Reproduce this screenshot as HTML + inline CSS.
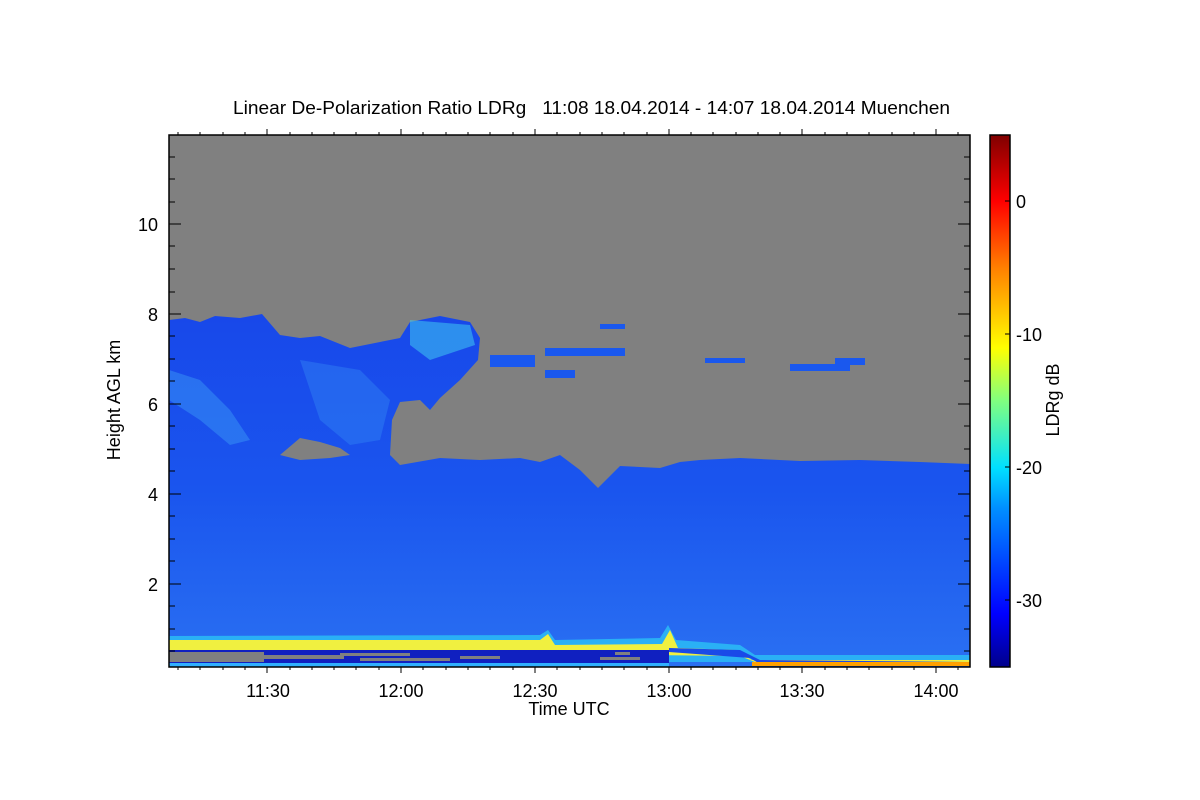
<!DOCTYPE html>
<html><head><style>
body{margin:0;background:#fff;}
svg{display:block;font-family:"Liberation Sans",sans-serif;}
</style></head><body>
<svg width="1200" height="800" viewBox="0 0 1200 800">
<defs>
<linearGradient id="cb" x1="0" y1="1" x2="0" y2="0">
<stop offset="0" stop-color="#00008a"/>
<stop offset="0.1" stop-color="#0000ff"/>
<stop offset="0.3" stop-color="#0090ff"/>
<stop offset="0.375" stop-color="#00e0ff"/>
<stop offset="0.5" stop-color="#80ff80"/>
<stop offset="0.6" stop-color="#ffff00"/>
<stop offset="0.75" stop-color="#ff8000"/>
<stop offset="0.875" stop-color="#ff0000"/>
<stop offset="1" stop-color="#800000"/>
</linearGradient>
<linearGradient id="bv" x1="0" y1="0" x2="0" y2="1">
<stop offset="0" stop-color="#1848ea"/>
<stop offset="0.5" stop-color="#1a55ee"/>
<stop offset="1" stop-color="#2a70f2"/>
</linearGradient>
</defs>
<text x="233" y="114" font-size="18" textLength="717" lengthAdjust="spacingAndGlyphs" xml:space="preserve">Linear De-Polarization Ratio LDRg   11:08 18.04.2014 - 14:07 18.04.2014 Muenchen</text>
<rect x="169" y="135" width="801" height="532" fill="#808080"/>
<polygon fill="url(#bv)" points="169,320 185,318 200,322 215,316 240,318 262,314 280,335 300,338 320,336 350,348 380,342 400,338 410,322 440,316 470,322 480,338 478,360 460,380 440,398 430,410 420,400 400,402 392,420 390,455 400,465 440,458 480,460 520,458 540,462 560,455 580,470 598,488 620,466 660,468 680,462 700,460 740,458 800,461 860,460 920,462 970,464 970,667 169,667"/>
<polygon fill="#3a95f5" opacity="0.5" points="169,370 200,380 230,410 250,440 230,445 200,420 169,400"/>
<polygon fill="#3a95f5" opacity="0.35" points="300,360 360,370 390,400 380,440 350,445 320,420"/>
<polygon fill="#40c8f0" opacity="0.55" points="410,320 470,325 475,345 430,360 410,345"/>
<polygon fill="#808080" points="280,455 300,438 320,442 340,448 350,455 330,458 300,460"/>
<g fill="#1a58ee">
<rect x="490" y="355" width="45" height="12"/><rect x="545" y="348" width="80" height="8"/>
<rect x="545" y="370" width="30" height="8"/><rect x="600" y="324" width="25" height="5"/>
<rect x="705" y="358" width="40" height="5"/><rect x="790" y="364" width="60" height="7"/>
<rect x="835" y="358" width="30" height="7"/>
</g>
<!-- ground bands -->
<polygon fill="#2ab0f5" points="169,636 540,635 548,630 555,640 660,638 668,625 676,640 740,645 755,655 970,655 970,662 169,662"/>
<polygon fill="#f0f040" points="169,640 540,640 548,634 555,645 662,644 670,630 678,648 735,650 752,660 970,660 970,664 760,664 740,656 169,650"/>
<rect x="169" y="650" width="500" height="13" fill="#1020c0"/>
<polygon fill="#1a4ae8" points="669,652 750,658 760,664 970,664 970,662 760,660 740,650 669,648"/>
<g fill="#808080">
<rect x="169" y="652" width="95" height="10"/><rect x="264" y="655" width="80" height="4"/>
<rect x="340" y="653" width="70" height="3"/><rect x="360" y="658" width="90" height="3"/>
<rect x="460" y="656" width="40" height="3"/><rect x="600" y="657" width="40" height="3"/>
<rect x="615" y="652" width="15" height="3"/>
</g>
<rect x="169" y="663" width="500" height="4" fill="#30b0ff"/>
<rect x="752" y="662" width="218" height="4" fill="#ffa000"/>
<rect x="169" y="135" width="801" height="532" fill="none" stroke="#000" stroke-width="1.5"/>
<g stroke="#000" stroke-width="1">
<path d="M169,224h12M169,314h12M169,404h12M169,494h12M169,584h12M970,224h-12M970,314h-12M970,404h-12M970,494h-12M970,584h-12"/>
<path d="M169,179h6M169,269h6M169,359h6M169,449h6M169,539h6M169,629h6M970,157h-6M970,179h-6M970,202h-6M970,246h-6M970,269h-6M970,292h-6M970,336h-6M970,359h-6M970,381h-6M970,426h-6M970,449h-6M970,471h-6M970,516h-6M970,539h-6M970,561h-6M970,606h-6M970,629h-6M970,651h-6M169,157h6M169,202h6M169,246h6M169,292h6M169,336h6M169,381h6M169,426h6M169,471h6M169,516h6M169,561h6M169,606h6M169,651h6"/>
<path d="M267,667v6M401,667v6M535,667v6M669,667v6M802,667v6M936,667v6M267,135v-6M401,135v-6M535,135v-6M669,135v-6M802,135v-6M936,135v-6"/>
<path d="M178,667v3M200,667v3M223,667v3M245,667v3M290,667v3M312,667v3M334,667v3M356,667v3M379,667v3M423,667v3M446,667v3M468,667v3M490,667v3M513,667v3M557,667v3M580,667v3M602,667v3M624,667v3M647,667v3M691,667v3M713,667v3M736,667v3M758,667v3M780,667v3M825,667v3M847,667v3M869,667v3M892,667v3M914,667v3M958,667v3"/>
<path d="M178,135v-3M200,135v-3M223,135v-3M245,135v-3M290,135v-3M312,135v-3M334,135v-3M356,135v-3M379,135v-3M423,135v-3M446,135v-3M468,135v-3M490,135v-3M513,135v-3M557,135v-3M580,135v-3M602,135v-3M624,135v-3M647,135v-3M691,135v-3M713,135v-3M736,135v-3M758,135v-3M780,135v-3M825,135v-3M847,135v-3M869,135v-3M892,135v-3M914,135v-3M958,135v-3"/>
</g>
<g font-size="18" text-anchor="end">
<text x="158" y="231">10</text><text x="158" y="321">8</text><text x="158" y="411">6</text><text x="158" y="501">4</text><text x="158" y="591">2</text>
</g>
<g font-size="18" text-anchor="middle">
<text x="268" y="697">11:30</text><text x="401" y="697">12:00</text><text x="535" y="697">12:30</text><text x="669" y="697">13:00</text><text x="802" y="697">13:30</text><text x="936" y="697">14:00</text>
<text x="569" y="715">Time UTC</text>
</g>
<text transform="translate(120,400) rotate(-90)" font-size="18" text-anchor="middle">Height AGL km</text>
<rect x="990" y="135" width="20" height="532" fill="url(#cb)" stroke="#000" stroke-width="1.5"/>
<g stroke="#000"><path d="M1010,201h-5M1010,334h-5M1010,467h-5M1010,600h-5"/></g>
<g font-size="18">
<text x="1016" y="208">0</text><text x="1016" y="341">-10</text><text x="1016" y="474">-20</text><text x="1016" y="607">-30</text>
</g>
<text transform="translate(1059,400) rotate(-90)" font-size="18" text-anchor="middle">LDRg dB</text>
</svg>
</body></html>
